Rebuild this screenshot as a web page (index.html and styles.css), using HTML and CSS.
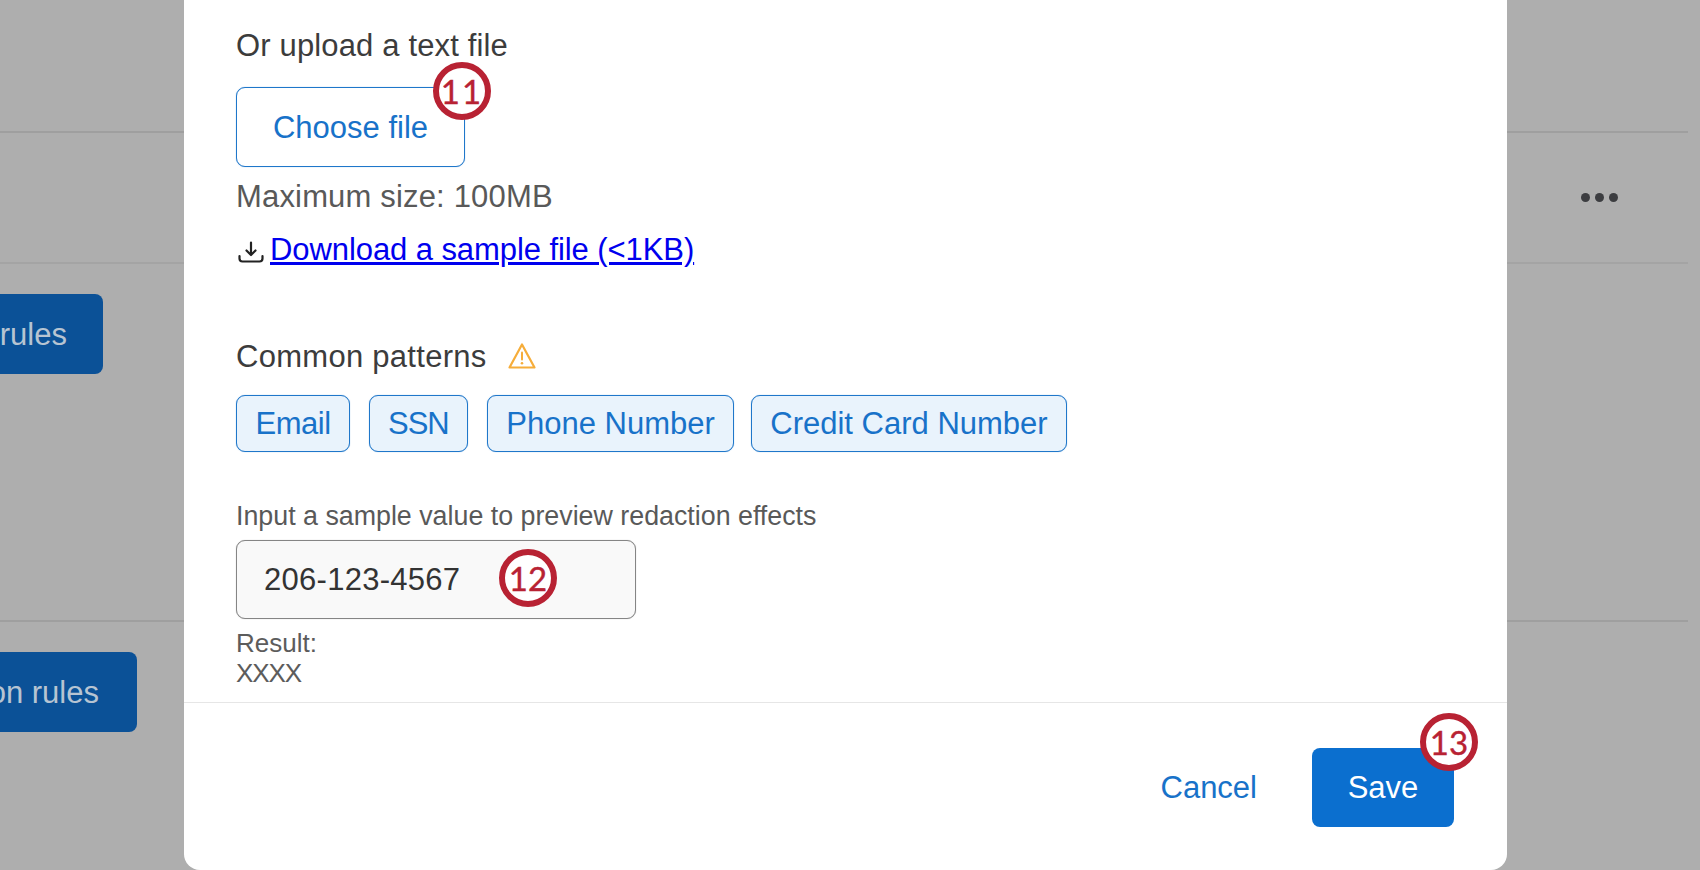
FILE: index.html
```html
<!DOCTYPE html>
<html lang="en">
<head>
<meta charset="utf-8">
<title>Redaction rule</title>
<link rel="stylesheet" href="styles.css">
</head>
<body>
<main class="page">
  <div class="row row-top"></div>
  <div class="row row-menu">
    <div class="dots"><span></span><span></span><span></span></div>
  </div>
  <div class="row row-first"><button class="bg-btn bg-btn-a"><span>rules</span></button></div>
  <div class="row-last"><button class="bg-btn bg-btn-b"><span>on rules</span></button></div>
</main>

<section class="modal">
  <div class="modal-body">
    <div class="label upload-label">Or upload a text file</div>
    <div class="file-wrap">
      <button class="file-btn">Choose file</button>
      <span class="badge badge-11">11</span>
    </div>
    <div class="hint">Maximum size: 100MB</div>
    <div class="download">
      <svg class="dl-icon" viewBox="0 0 26 22" width="26" height="22" aria-hidden="true">
        <path d="M13 1.5V13.5M8.5 9.5L13 14L17.5 9.5" fill="none" stroke="#222" stroke-width="2.2" stroke-linecap="round" stroke-linejoin="round"/>
        <path d="M1.5 15V17.500A3 3 0 0 0 4.500 20.500H21.500A3 3 0 0 0 24.500 17.500V15" fill="none" stroke="#222" stroke-width="2.200" stroke-linecap="round"/>
      </svg>
      <a class="dl-link" href="#">Download a sample file (&lt;1KB)</a>
    </div>
    <div class="label patterns">Common patterns
      <svg class="warn" viewBox="0 0 28 28" width="28" height="28" aria-hidden="true">
        <path d="M14 2.500L26.500 25.500H1.500Z" fill="none" stroke="#f6ad3a" stroke-width="2.200" stroke-linejoin="round"/>
        <path d="M14 10.500V17.500" stroke="#f6ad3a" stroke-width="2" stroke-linecap="round"/>
        <circle cx="14" cy="21.200" r="1.300" fill="#f6ad3a"/>
      </svg>
    </div>
    <div class="chips">
      <button class="chip chip-email">Email</button>
      <button class="chip chip-ssn">SSN</button>
      <button class="chip">Phone Number</button>
      <button class="chip chip-card">Credit Card Number</button>
    </div>
    <div class="sample-label">Input a sample value to preview redaction effects</div>
    <div class="sample-wrap">
      <div class="sample-input">206-123-4567</div>
      <span class="badge badge-12">12</span>
    </div>
    <div class="result">Result:<br><span class="result-value">XXXX</span></div>
  </div>
  <footer class="modal-foot">
    <button class="cancel">Cancel</button>
    <div class="save-wrap">
      <button class="save">Save</button>
      <span class="badge badge-13">13</span>
    </div>
  </footer>
</section>
</body>
</html>
```

FILE: styles.css
```css
* { box-sizing: border-box; }
html, body { margin: 0; height: 100%; }
body {
  width: 1700px;
  height: 870px;
  overflow: hidden;
  position: relative;
  background: #aeaeae;
  font-family: "Liberation Sans", Arial, sans-serif;
  font-size: 31px;
  color: #3a3a3a;
}
button { font: inherit; cursor: pointer; }

/* dimmed page behind the dialog */
.page { padding-right: 12px; }
.row { border-bottom: 2px solid #9f9f9f; }
.row-top { height: 133px; }
.row-menu { height: 131px; display: flex; align-items: center; justify-content: flex-end; padding-right: 70px; border-bottom-color: #a4a4a4; }
.row-first { height: 358px; padding-top: 30px; }
.row-last { padding-top: 30px; }
.dots { display: flex; gap: 5px; }
.dots span { width: 9px; height: 9px; border-radius: 50%; background: #3c3d40; }
.bg-btn {
  display: flex;
  justify-content: flex-end;
  align-items: center;
  height: 80px;
  border: 0;
  border-radius: 0 8px 8px 0;
  background: #0b5197;
  color: #b7c4d2;
  overflow: hidden;
  white-space: nowrap;
}
.bg-btn span { flex: none; padding-top: 2px; }
.bg-btn-a { width: 103px; padding: 0 36px 0 0; }
.bg-btn-b { width: 137px; padding: 0 38px 0 0; }

/* dialog */
.modal {
  position: absolute;
  left: 184px;
  top: 0;
  width: 1323px;
  height: 870px;
  display: flex;
  flex-direction: column;
  background: #fff;
  border-radius: 0 0 16px 16px;
}
.modal-body { flex: 1; padding: 28px 52px 0; }
.label { line-height: 36px; color: #3c3c3c; }
.upload-label { letter-spacing: 0.15px; }
.file-wrap { position: relative; width: 229px; margin-top: 23px; }
.file-btn {
  display: block;
  width: 229px;
  height: 80px;
  padding: 2px 0 0;
  background: #fff;
  color: #1872c9;
  border: 1px solid #1f77ca;
  border-radius: 9px;
  box-shadow: 0 0 1px rgba(31, 119, 202, 0.6);
}
.hint { margin-top: 12px; line-height: 36px; color: #595959; letter-spacing: 0.17px; }
.download { display: flex; align-items: center; gap: 6px; margin-top: 17px; padding-left: 2px; line-height: 36px; }
.dl-icon { flex: none; margin-top: 4px; }
.dl-link { color: #0000ee; text-decoration: underline; letter-spacing: -0.08px; }
.patterns { display: flex; align-items: center; gap: 21px; margin-top: 71px; letter-spacing: 0.28px; }
.warn { flex: none; margin-top: -2px; }
.chips { display: flex; gap: 18.500px; margin-top: 20px; }
.chip {
  height: 57px;
  padding: 0 18.500px;
  background: #e9f3fc;
  color: #1872c9;
  border: 1px solid #1f77ca;
  border-radius: 9px;
  box-shadow: 0 0 1px rgba(31, 119, 202, 0.6);
  white-space: nowrap;
}
.chip-email { letter-spacing: -0.5px; }
.chip-ssn { letter-spacing: -1px; }
.chip-card { margin-left: -2px; }
.sample-label { margin-top: 48px; margin-bottom: 8px; font-size: 26.800px; line-height: 32px; color: #595959; }
.sample-wrap { position: relative; width: 400px; }
.sample-input {
  height: 79px;
  padding-left: 27px;
  line-height: 77px;
  background: #f9f9f9;
  color: #333;
  border: 1px solid #858585;
  border-radius: 9px;
  box-shadow: 0 0 1px rgba(133, 133, 133, 0.6);
  letter-spacing: 0.27px;
}
.result { margin-top: 9px; font-size: 26px; line-height: 30px; color: #5c5c5c; }
.result-value { letter-spacing: -1.1px; }
.modal-foot {
  display: flex;
  align-items: center;
  justify-content: flex-end;
  gap: 55px;
  height: 168px;
  padding: 45px 53px 43px 0;
  border-top: 1px solid #e6e6e6;
}
.cancel { padding: 0; border: 0; background: none; color: #1872c9; }
.save-wrap { position: relative; }
.save {
  display: block;
  width: 142px;
  height: 79px;
  padding: 0;
  border: 0;
  border-radius: 8px;
  background: #0b6fcf;
  color: #fff;
}

/* numbered callouts */
.badge {
  position: absolute;
  display: flex;
  align-items: center;
  justify-content: center;
  width: 58px;
  height: 58px;
  border: 6px solid #b82233;
  border-radius: 50%;
  background: #fff;
  color: #b82233;
  font-family: Lato, sans-serif;
  font-size: 33px;
  line-height: 1;
  -webkit-text-stroke: 0.4px #b82233;
}
.badge-11 { left: 197px; top: -25px; letter-spacing: 2px; }
.badge-12 { left: 263px; top: 9px; }
.badge-13 { left: 108px; top: -35px; }
```
